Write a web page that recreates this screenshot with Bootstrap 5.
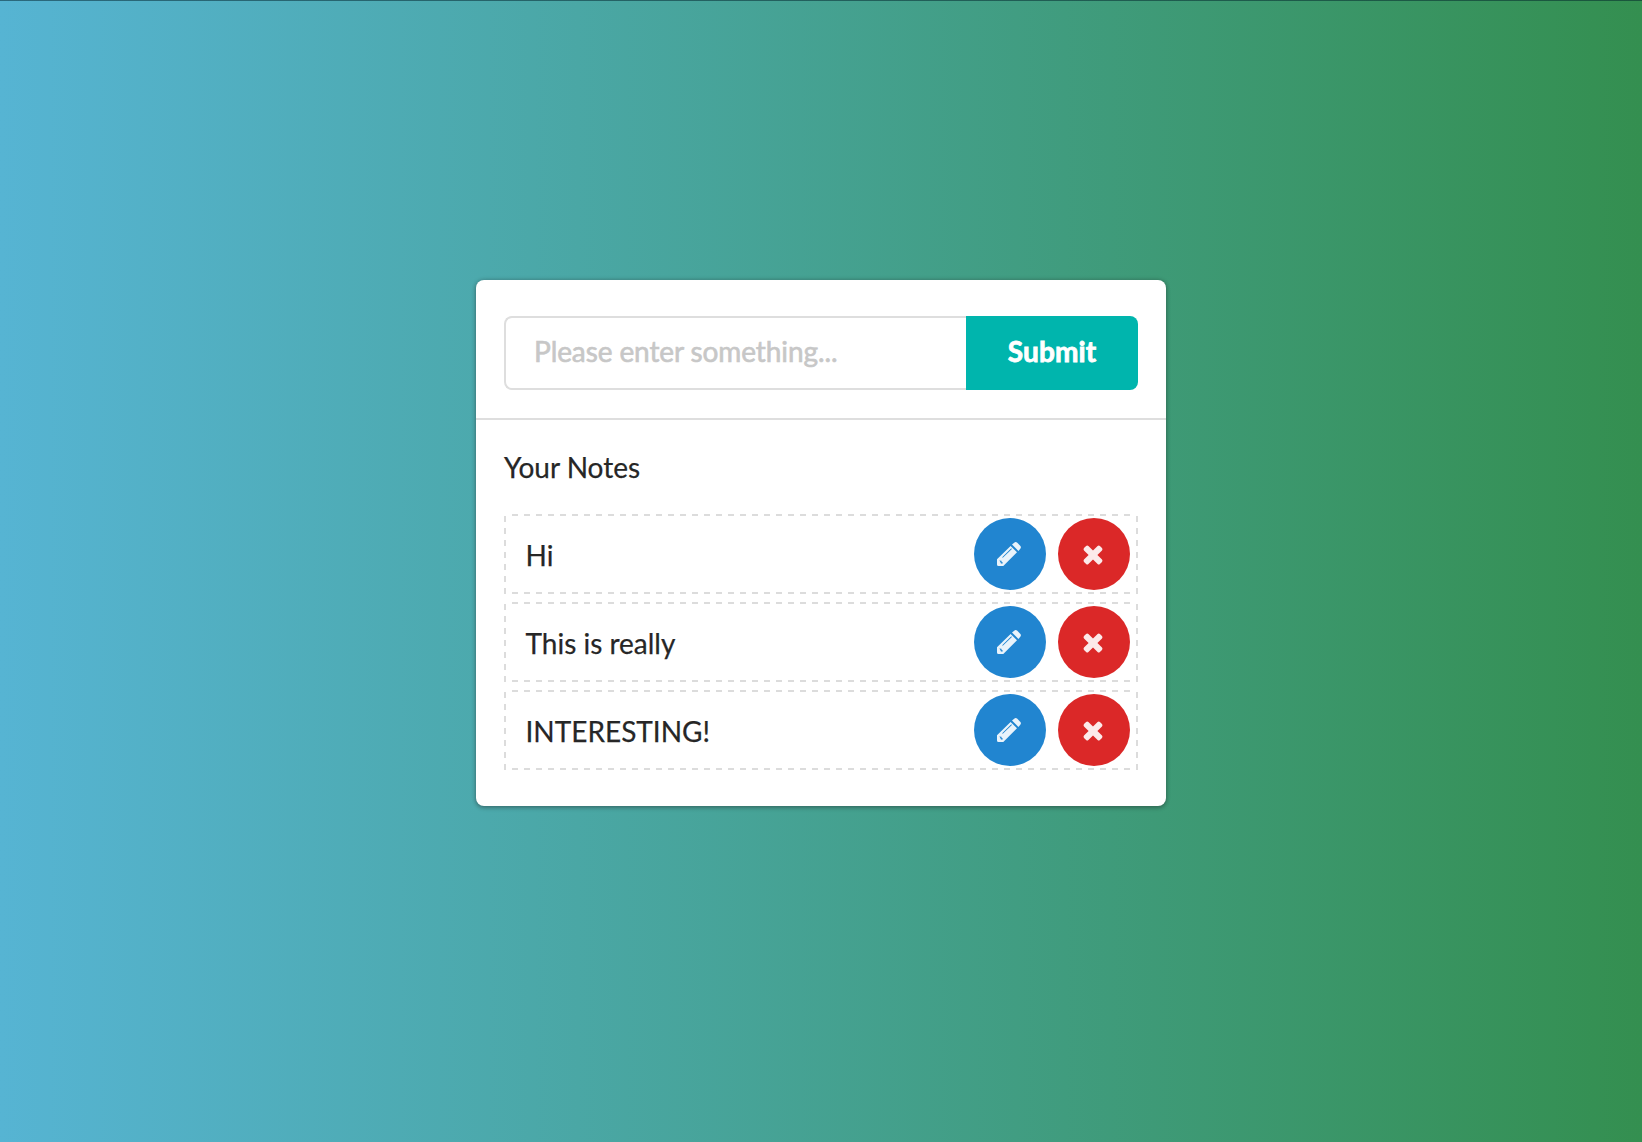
<!DOCTYPE html>
<html lang="en">
  <head>
    <meta charset="UTF-8" />
    <meta name="viewport" content="width=device-width, initial-scale=1.0" />
    <title>Notes</title>
    <link
      rel="stylesheet"
      href="https://cdn.jsdelivr.net/npm/bootstrap@5.3.0/dist/css/bootstrap.min.css"
    />
    <style>
      body {
        min-height: 100vh;
        font-family: Lato, "Liberation Sans", sans-serif;
        font-size: 28px;
        line-height: 40px;
        color: rgba(0, 0, 0, 0.87);
        background: linear-gradient(to right, #56b4d3, #348f50);
        border-top: 1px solid rgba(0, 30, 40, 0.5);
        padding-top: 279px;
      }
      .notes-card {
        width: 690px;
        height: 526px;
        border: 0;
        border-radius: 8px;
        box-shadow: 0 2px 4px 0 rgba(34, 36, 38, 0.3),
          0 0 4px 0 rgba(34, 36, 38, 0.3);
      }
      .note-form {
        padding: 36px 28px 28px;
        border-bottom: 2px solid #dedede;
      }
      .note-form .form-control {
        height: 74px;
        padding: 0 28px 4px;
        font-size: 28px;
        letter-spacing: -0.1px;
        border: 2px solid #dedede;
        border-right: 0;
        border-radius: 8px 0 0 8px;
      }
      .note-form .form-control::placeholder {
        color: #c7c7c7;
        -webkit-text-stroke: 0.6px #c7c7c7;
      }
      .note-form .btn-submit {
        width: 172px;
        height: 74px;
        padding: 0 0 4px;
        font-size: 28px;
        font-weight: 700;
        letter-spacing: 0.1px;
        color: #fff;
        -webkit-text-stroke: 0.8px #fff;
        background-color: #00b5ad;
        border: 0;
        border-radius: 0 8px 8px 0;
      }
      .note-list {
        padding: 27px 28px;
        -webkit-text-stroke: 0.25px #212121;
      }
      .note-title {
        font-size: 28px;
        font-weight: 400;
        line-height: 40px;
        margin-bottom: 27px;
      }
      /* dashed frame: top, bottom, left, right */
      .note-item {
        --dash-x: repeating-linear-gradient(to right, #dcdcdc 0 6px, transparent 6px 12px);
        --dash-y: repeating-linear-gradient(to bottom, #dcdcdc 0 6px, transparent 6px 12px);
        height: 80px;
        margin-bottom: 8px;
        padding: 0 8px 0 21.5px;
        background: var(--dash-x) 8px 0 / 618px 2px no-repeat,
          var(--dash-x) 8px 78px / 618px 2px no-repeat,
          var(--dash-y) 0 2px / 2px 78px no-repeat,
          var(--dash-y) 632px 2px / 2px 78px no-repeat;
      }
      .note-text {
        padding-top: 2px;
      }
      .note-item .btn {
        display: flex;
        align-items: center;
        justify-content: center;
        width: 72px;
        height: 72px;
        padding: 0 2px 0 0;
        border: 0;
      }
      .note-item .btn-edit {
        background-color: #2185d0;
        margin-right: 12px;
      }
      .note-item .btn-remove {
        padding-top: 2px;
        background-color: #db2828;
      }
      .note-item svg {
        fill: #fff;
        fill-opacity: 0.9;
      }
    </style>
  </head>
  <body>
    <svg class="d-none">
      <symbol id="pencil" viewBox="0 0 24 24">
        <path
          fill-rule="evenodd"
          d="M0 22.5V17.2L13.6 3.9L20 10.2L6.3 24H1.5Q0 24 0 22.5ZM2.3 18.4L4.4 18.8L4.8 20.2L6 20.6L5.2 21.8L3.8 21.2L3.4 20Z M5.2 15.2L5.8 15.8L14.9 6.9L14.3 6.3Z"
        />
        <path d="M15 2.6L17.2 .7Q18.8 -.6 20.3 .8L23.2 3.7Q24.6 5.1 23.3 6.7L21.4 8.9Z" />
      </symbol>
      <symbol id="remove" viewBox="0 0 20 20">
        <path
          d="M3.1 .9Q4.3 0 5.4 1L10 5.6L14.6 1Q15.7 0 16.9 .9L19 3.1Q20 4.3 19 5.4L14.4 10L19 14.6Q20 15.7 19 16.9L16.9 19Q15.7 20 14.6 19L10 14.4L5.4 19Q4.3 20 3.1 19L1 16.9Q0 15.7 1 14.6L5.6 10L1 5.4Q0 4.3 1 3.1Z"
        />
      </symbol>
    </svg>

    <div class="card notes-card mx-auto">
      <form class="note-form">
        <div class="input-group flex-nowrap">
          <input
            type="text"
            class="form-control"
            placeholder="Please enter something..."
          />
          <button type="button" class="btn btn-submit">Submit</button>
        </div>
      </form>
      <div class="note-list">
        <h2 class="note-title">Your Notes</h2>
        <div class="note-item d-flex align-items-center">
          <span class="note-text me-auto">Hi</span>
          <button class="btn btn-edit rounded-circle" aria-label="Edit">
            <svg width="24" height="24"><use href="#pencil" /></svg>
          </button>
          <button class="btn btn-remove rounded-circle" aria-label="Remove">
            <svg width="20" height="20"><use href="#remove" /></svg>
          </button>
        </div>
        <div class="note-item d-flex align-items-center">
          <span class="note-text me-auto">This is really</span>
          <button class="btn btn-edit rounded-circle" aria-label="Edit">
            <svg width="24" height="24"><use href="#pencil" /></svg>
          </button>
          <button class="btn btn-remove rounded-circle" aria-label="Remove">
            <svg width="20" height="20"><use href="#remove" /></svg>
          </button>
        </div>
        <div class="note-item d-flex align-items-center">
          <span class="note-text me-auto">INTERESTING!</span>
          <button class="btn btn-edit rounded-circle" aria-label="Edit">
            <svg width="24" height="24"><use href="#pencil" /></svg>
          </button>
          <button class="btn btn-remove rounded-circle" aria-label="Remove">
            <svg width="20" height="20"><use href="#remove" /></svg>
          </button>
        </div>
      </div>
    </div>

    <script src="https://cdn.jsdelivr.net/npm/bootstrap@5.3.0/dist/js/bootstrap.bundle.min.js"></script>
  </body>
</html>
